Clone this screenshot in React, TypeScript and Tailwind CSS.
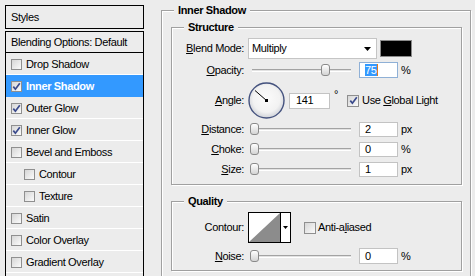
import React from "react";

const Check = ({ checked, size = 11 }: { checked?: boolean; size?: number }) => (
  <span
    className={
      size === 12
        ? "flex h-[12px] w-[12px] shrink-0 items-center justify-center border border-[#8f8f8f] bg-gradient-to-br from-[#d6d6d6] to-[#fbfbfb]"
        : "flex h-[11px] w-[11px] shrink-0 items-center justify-center border border-[#8f8f8f] bg-gradient-to-br from-[#d6d6d6] to-[#fbfbfb]"
    }
  >
    {checked && (
      <svg width="9" height="9" viewBox="0 0 9 9">
        <path d="M1.3 4.6 L3.4 7.2 L7.8 1.2" fill="none" stroke="#3a4a8c" strokeWidth="1.7" />
      </svg>
    )}
  </span>
);

type Item = { label: string; checked?: boolean; selected?: boolean; indent?: boolean };

const items: Item[] = [
  { label: "Drop Shadow" },
  { label: "Inner Shadow", checked: true, selected: true },
  { label: "Outer Glow", checked: true },
  { label: "Inner Glow", checked: true },
  { label: "Bevel and Emboss" },
  { label: "Contour", indent: true },
  { label: "Texture", indent: true },
  { label: "Satin" },
  { label: "Color Overlay" },
  { label: "Gradient Overlay" },
];

const Slider = ({ pct }: { pct: number }) => (
  <div className="relative ml-[8px] flex h-[12px] w-[99px] shrink-0 items-center">
    <div className="h-[3px] w-full border-t border-[#a3a3a3] border-b border-b-white bg-[#e2e2e2]" />
    <div
      className="absolute top-0 h-[12px] w-[9px] rounded-[3px] border border-[#8a8a8a] bg-gradient-to-b from-white to-[#d4d4d4]"
      style={{ left: -2 + (pct / 100) * 95 }}
    />
  </div>
);

const Field = ({ children, h = 15, focus = false }: { children: React.ReactNode; h?: number; focus?: boolean }) => (
  <div
    className={
      (focus ? "border-[#8fb0d6] " : "border-[#c3c3c3] ") +
      (h === 16 ? "h-[16px] " : "h-[15px] ") +
      "ml-[8px] flex w-[39px] shrink-0 items-center border bg-white pl-[5px]"
    }
  >
    {children}
  </div>
);

const Label = ({ children }: { children: React.ReactNode }) => (
  <span className="w-[72px] shrink-0 text-right">{children}</span>
);

const Group = ({ title, children, className }: { title: string; children: React.ReactNode; className: string }) => (
  <div
    className={
      "flex flex-col border border-[#a0a0a0] shadow-[inset_1px_1px_0_#fff,1px_1px_0_#fff] " + className
    }
  >
    <span className="-mt-[7px] ml-[12px] w-fit bg-[#ececec] px-[4px] font-bold leading-[13px]">{title}</span>
    {children}
  </div>
);

export default function App() {
  return (
    <div className="flex h-[276px] w-[475px] items-start overflow-hidden bg-[#ececec] font-['Liberation_Sans',Arial,sans-serif] text-[11px] leading-[13px] tracking-[-0.35px] text-black">
      {/* Left styles list */}
      <div className="ml-[5px] mt-[5px] flex w-[139px] shrink-0 flex-col">
        <div className="flex h-[24px] items-center border border-black pl-[5px]">Styles</div>
        <div className="mt-[2px] flex flex-col border-x border-t border-black">
          <div className="flex h-[21px] items-center border-b border-black pl-[5px]">Blending Options: Default</div>
          {items.map((it) => (
            <div
              key={it.label}
              className={
                (it.selected
                  ? "border-[#3399ff] bg-[#3399ff] font-bold text-white "
                  : "border-white ") +
                (it.indent ? "pl-[18px] " : "pl-[5px] ") +
                "flex h-[22px] shrink-0 items-center gap-[4px] border-b pt-[1px]"
              }
            >
              <Check checked={it.checked} />
              <span>{it.label}</span>
            </div>
          ))}
          <div className="h-[12px]" />
        </div>
      </div>

      {/* Right panel */}
      <div className="ml-[17px] mt-[10px] shrink-0">
        <Group title="Inner Shadow" className="h-[300px] w-[310px]">
          <Group title="Structure" className="ml-[9px] mt-[10px] w-[291px] pb-[5px]">
            {/* Blend mode */}
            <div className="mt-[4px] flex h-[21px] items-center">
              <Label>
                <span className="underline underline-offset-1">B</span>lend Mode:
              </Label>
              <div className="ml-[4px] flex h-[21px] w-[129px] items-center justify-between border border-[#c5c5c5] bg-white pl-[3px] pr-[5px]">
                <span>Multiply</span>
                <svg width="7" height="4" viewBox="0 0 7 4">
                  <polygon points="0,0 7,0 3.5,4" fill="#000" />
                </svg>
              </div>
              <div className="ml-[3px] h-[17px] w-[32px] border border-[#8a8a8a] bg-black" />
            </div>
            {/* Opacity */}
            <div className="mt-[3px] flex h-[16px] items-center">
              <Label>
                <span className="underline underline-offset-1">O</span>pacity:
              </Label>
              <Slider pct={75} />
              <Field h={16} focus>
                <span className="bg-[#3399ff] leading-[12px] text-white">75</span>
                <span className="h-[12px] w-[1px] bg-[#e07a1f]" />
              </Field>
              <span className="ml-[3px]">%</span>
            </div>
            {/* Angle */}
            <div className="mt-[4px] flex h-[37px] items-center">
              <Label>
                <span className="underline underline-offset-1">A</span>ngle:
              </Label>
              <svg className="ml-[4px] shrink-0" width="37" height="37" viewBox="0 0 37 37">
                <defs>
                  <radialGradient id="dialg" cx="50%" cy="45%" r="55%">
                    <stop offset="0%" stopColor="#fbfbfb" />
                    <stop offset="70%" stopColor="#f2f2f2" />
                    <stop offset="100%" stopColor="#cfd2d8" />
                  </radialGradient>
                </defs>
                <circle cx="18.5" cy="18.5" r="17.5" fill="url(#dialg)" stroke="#44527e" strokeWidth="1.4" />
                <line x1="18.5" y1="18.5" x2="7" y2="8.5" stroke="#000" strokeWidth="1" />
                <rect x="17" y="17" width="3" height="3" fill="#000" />
              </svg>
              <div className="ml-[4px] flex h-[16px] w-[41px] shrink-0 items-center border border-[#c3c3c3] bg-white pl-[6px]">
                141
              </div>
              <span className="-mt-[4px] ml-[4px] self-start pt-[10px]">°</span>
              <span className="ml-[9px]">
                <Check checked size={12} />
              </span>
              <span className="ml-[3px]">
                Use <span className="underline underline-offset-1">G</span>lobal Light
              </span>
            </div>
            {/* Distance */}
            <div className="flex h-[20px] items-center">
              <Label>
                <span className="underline underline-offset-1">D</span>istance:
              </Label>
              <Slider pct={0} />
              <Field>2</Field>
              <span className="ml-[3px]">px</span>
            </div>
            {/* Choke */}
            <div className="flex h-[20px] items-center">
              <Label>
                <span className="underline underline-offset-1">C</span>hoke:
              </Label>
              <Slider pct={0} />
              <Field>0</Field>
              <span className="ml-[3px]">%</span>
            </div>
            {/* Size */}
            <div className="flex h-[20px] items-center">
              <Label>
                <span className="underline underline-offset-1">S</span>ize:
              </Label>
              <Slider pct={0} />
              <Field>1</Field>
              <span className="ml-[3px]">px</span>
            </div>
          </Group>

          <Group title="Quality" className="ml-[9px] mt-[16px] w-[291px] pb-[6px]">
            <div className="mt-[4px] flex h-[31px] items-center">
              <Label>Contour:</Label>
              <div className="ml-[4px] flex h-[31px] w-[43px] shrink-0 border border-black bg-white">
                <svg width="31" height="29" viewBox="0 0 31 29">
                  <polygon points="0,29 31,0 31,29" fill="#8c8c8c" />
                </svg>
                <div className="flex w-[9px] items-center justify-center border-l border-black">
                  <svg width="5" height="3" viewBox="0 0 5 3">
                    <polygon points="0,0 5,0 2.5,3" fill="#000" />
                  </svg>
                </div>
              </div>
              <span className="ml-[13px]">
                <Check size={12} />
              </span>
              <span className="ml-[2px]">
                Anti-a<span className="underline underline-offset-1">l</span>iased
              </span>
            </div>
            <div className="mt-[5px] flex h-[16px] items-center">
              <Label>
                <span className="underline underline-offset-1">N</span>oise:
              </Label>
              <Slider pct={0} />
              <Field h={16}>0</Field>
              <span className="ml-[3px]">%</span>
            </div>
          </Group>
        </Group>
      </div>
    </div>
  );
}
